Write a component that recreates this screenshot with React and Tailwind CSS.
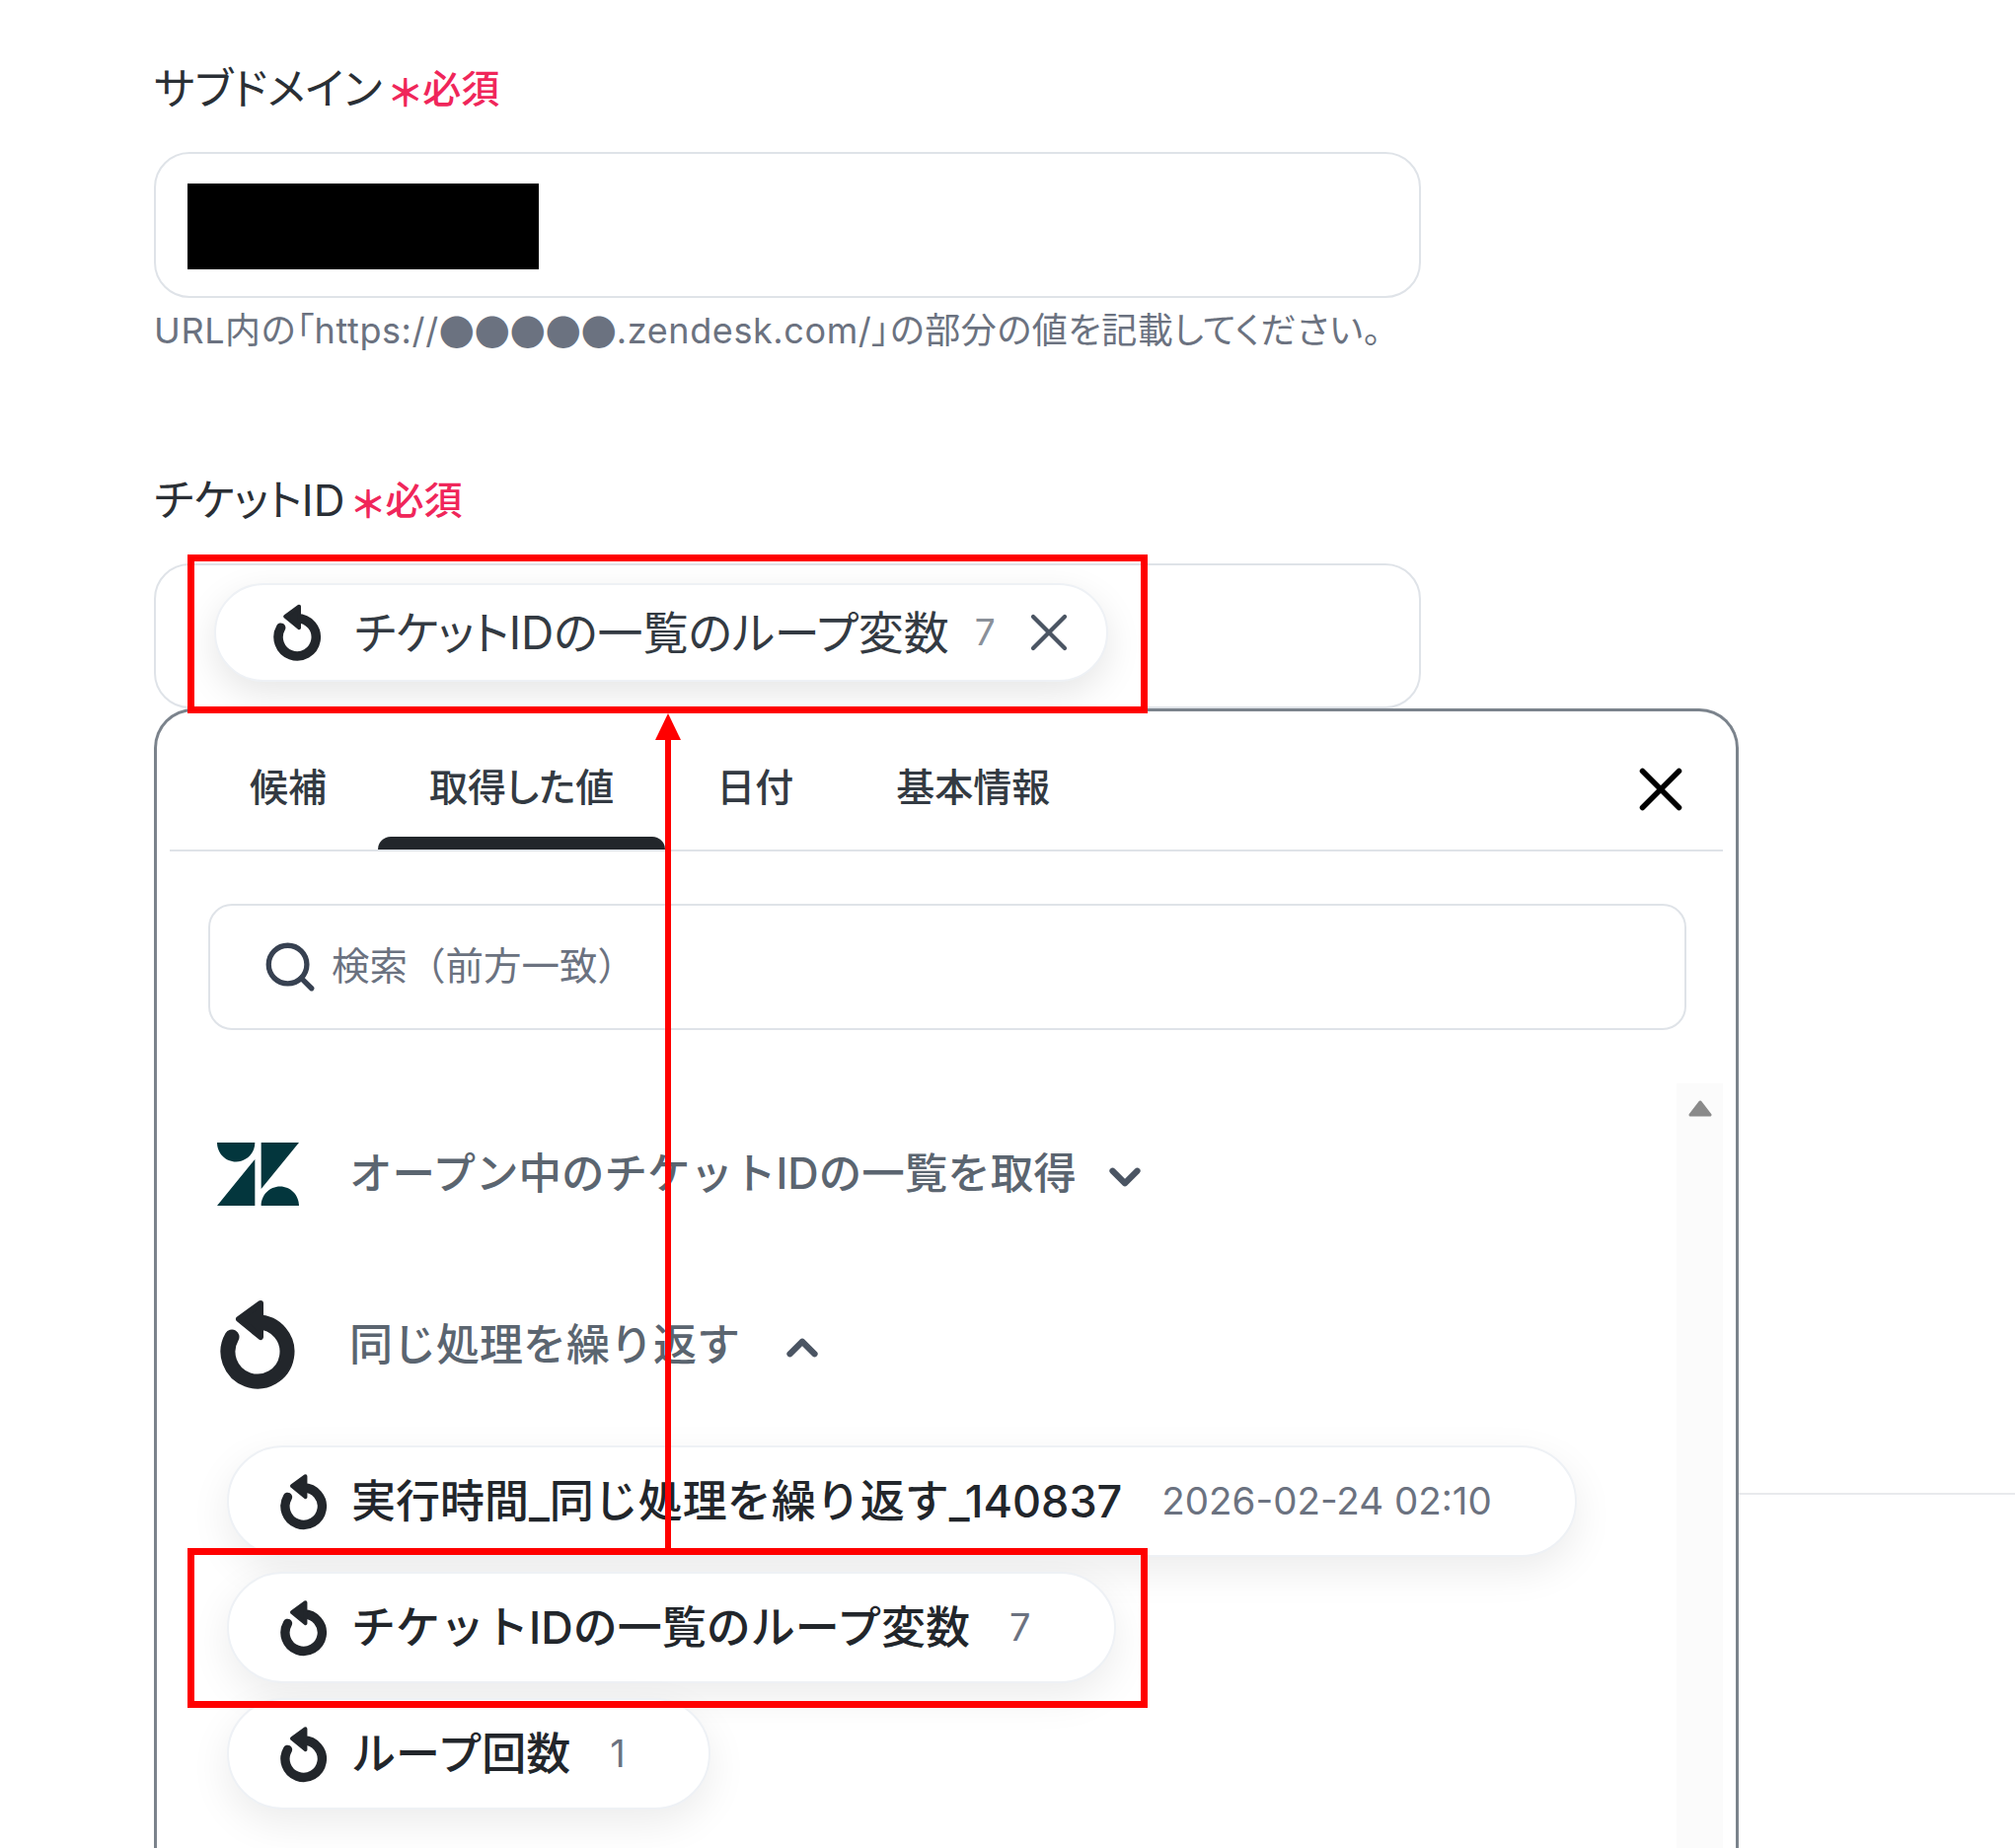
// App.jsx
import React from 'react';
import { ChevronDown, ChevronUp, Search, X } from 'lucide-react';

const LoopIcon = ({ className }) => (
	<svg viewBox="0 0 77 91" className={className}>
		<path d="M12 38A30 30 0 1 0 38 23" fill="none" stroke="#22262b" strokeWidth="15" strokeLinecap="round" />
		<path d="M41 4L19 20L41 38Z" fill="#22262b" stroke="#22262b" strokeWidth="6" strokeLinejoin="round" />
	</svg>
);

const ZendeskLogo = () => (
	<svg viewBox="0 2.9 24 18.2" preserveAspectRatio="none" className="w-[83px] h-[64px]">
		<path
			fill="#03363d"
			d="M12.914 2.904V16.29L24 2.905H12.914zM0 2.906C0 5.966 2.483 8.45 5.543 8.45s5.542-2.484 5.543-5.544H0zm11.086 4.807L0 21.096h11.086V7.713zm7.37 7.84c-3.063 0-5.542 2.48-5.542 5.543H24c0-3.06-2.48-5.543-5.543-5.543z"
		/>
	</svg>
);

const FieldLabel = ({ children, className }) => (
	<div className={`flex items-center h-[60px] text-[44px] text-[#2a2f35] [font-feature-settings:'palt'] ${className}`}>
		<span>{children}</span>
		<span className="ml-[8px] mt-[8px] text-[38px] font-bold text-[#f0265a]">＊</span>
		<span className="ml-[2px] text-[39px] font-medium text-[#f0265a]">必須</span>
	</div>
);

const tabs = [
	{ label: '候補' },
	{ label: '取得した値', active: true },
	{ label: '日付' },
	{ label: '基本情報' },
];

const OutputPill = ({ label, value, valueClass }) => (
	<div className="flex items-center w-fit h-[113px] pl-[52px] pr-[84px] bg-white rounded-full border-2 border-[#eef1f5] shadow-[0_14px_40px_rgba(0,0,0,0.08)]">
		<LoopIcon className="w-[48px] h-[58px] shrink-0" />
		<span className="ml-[24px] text-[45px] font-medium text-[#22262b] whitespace-nowrap">{label}</span>
		<span className={`text-[#6b7280] whitespace-nowrap ${valueClass}`}>{value}</span>
	</div>
);

const App = () => {
	return (
		<div className="relative w-[2042px] h-[1873px] overflow-hidden bg-white pt-[60px] pl-[156px] font-['Inter','Noto_Sans_CJK_JP',sans-serif]">
			<FieldLabel>サブドメイン</FieldLabel>
			<div className="mt-[34px] flex items-center w-[1284px] h-[148px] pl-[32px] rounded-[36px] border-2 border-[#dfe3e8]">
				<div className="mt-[3px] w-[356px] h-[87px] bg-black"></div>
			</div>
			<p className="mt-[10px] h-[46px] flex items-center text-[36px] tracking-[0.6px] text-[#6b7280] whitespace-nowrap [font-feature-settings:'palt']">
				URL内の「https://
				<span className="font-['Noto_Sans_CJK_JP'] tracking-normal [font-feature-settings:'normal']">●●●●●</span>
				.zendesk.com/」の部分の値を記載してください。
			</p>

			<FieldLabel className="mt-[119px]">チケットID</FieldLabel>
			<div className="mt-[34px] w-[1284px] h-[147px] pt-[18px] pl-[59px] rounded-[36px] border-2 border-[#dfe3e8]">
				<div className="flex items-center w-[906px] h-[100px] pl-[58px] bg-white rounded-full border-2 border-[#eef1f5] shadow-[0_12px_36px_rgba(0,0,0,0.1)]">
					<LoopIcon className="w-[49px] h-[58px] shrink-0" />
					<span className="ml-[33px] text-[46px] text-[#333a42] whitespace-nowrap [font-feature-settings:'palt']">チケットIDの一覧のループ変数</span>
					<span className="ml-[26px] text-[37px] text-[#8a9099]">7</span>
					<X className="ml-[22px] w-[64px] h-[64px] text-[#4b5563]" strokeWidth={1.6} />
				</div>
			</div>

			<div className="flex">
				<div className="w-[1606px] h-[1160px] shrink-0 rounded-t-[40px] border-[3px] border-b-0 border-[#7b838c] bg-white">
					<nav className="flex h-[142px] mx-[13px] pl-[29px] border-b-2 border-[#dfe3e8]">
						{tabs.map((tab) => (
							<div key={tab.label} className="flex flex-col h-full">
								<span className="flex-1 flex items-center pt-[28px] px-[52px] text-[39px] font-medium text-[#333a42] whitespace-nowrap [font-feature-settings:'palt']">
									{tab.label}
								</span>
								<span className={`h-[13px] rounded-t-full ${tab.active ? 'bg-[#22262b]' : ''}`}></span>
							</div>
						))}
						<X className="ml-auto mr-[26px] mt-[42px] w-[74px] h-[74px] text-black" strokeWidth={1.8} />
					</nav>

					<div className="flex items-center mt-[53px] ml-[52px] w-[1498px] h-[128px] pl-[52px] rounded-[24px] border-2 border-[#dfe3e8]">
						<Search className="w-[58px] h-[58px] text-[#374151]" strokeWidth={2.2} />
						<span className="ml-[13px] text-[38.5px] text-[#6b7280]">検索（前方一致）</span>
					</div>

					<div className="flex mt-[54px] mx-[13px]">
						<div className="flex-1 pl-[48px] pt-[60px]">
							<div className="flex items-center h-[64px]">
								<ZendeskLogo />
								<span className="ml-[51px] text-[43.5px] font-medium text-[#5b6570] whitespace-nowrap">
									オープン中のチケットIDの一覧を取得
								</span>
								<ChevronDown className="ml-[24px] mt-[6px] w-[50px] h-[50px] text-[#4b5563]" strokeWidth={3} />
							</div>
							<div className="flex items-center mt-[94px] h-[93px]">
								<div className="w-[83px] flex justify-center">
									<LoopIcon className="w-[77px] h-[93px]" />
								</div>
								<span className="ml-[51px] text-[44px] font-medium text-[#5b6570] whitespace-nowrap">同じ処理を繰り返す</span>
								<ChevronUp className="ml-[38px] mt-[6px] w-[50px] h-[50px] text-[#4b5563]" strokeWidth={3} />
							</div>
							<div className="flex flex-col gap-[15px] mt-[56px] ml-[10px]">
								<OutputPill label="実行時間_同じ処理を繰り返す_140837" value="2026-02-24 02:10" valueClass="ml-[40px] text-[38.5px]" />
								<OutputPill label="チケットIDの一覧のループ変数" value="7" valueClass="ml-[40px] text-[38px]" />
								<OutputPill label="ループ回数" value="1" valueClass="ml-[40px] text-[38px]" />
							</div>
						</div>
						<div className="w-[47px] h-[800px] bg-[#fbfbfb] flex justify-center pt-[17px]">
							<svg viewBox="0 0 24 18" className="w-[24px] h-[18px]">
								<path d="M12 2L22 15H2Z" fill="#8a8a8a" stroke="#8a8a8a" strokeWidth="3" strokeLinejoin="round" />
							</svg>
						</div>
					</div>
				</div>
				<div className="flex-1 pt-[795px]">
					<div className="h-[2px] bg-[#e8eaed]"></div>
				</div>
			</div>

			{/* red annotation over the screenshot */}
			<div className="absolute left-[190px] top-[562px] w-[973px] h-[161px] border-[7px] border-[#ff0000]"></div>
			<div className="absolute left-[190px] top-[1569px] w-[973px] h-[162px] border-[7px] border-[#ff0000]"></div>
			<div className="absolute left-[674px] top-[745px] w-[6px] h-[825px] bg-[#ff0000]"></div>
			<svg viewBox="0 0 26 27" className="absolute left-[664px] top-[723px] w-[26px] h-[27px]">
				<path d="M13 0L26 27H0Z" fill="#ff0000" />
			</svg>
		</div>
	);
};

export default App;
